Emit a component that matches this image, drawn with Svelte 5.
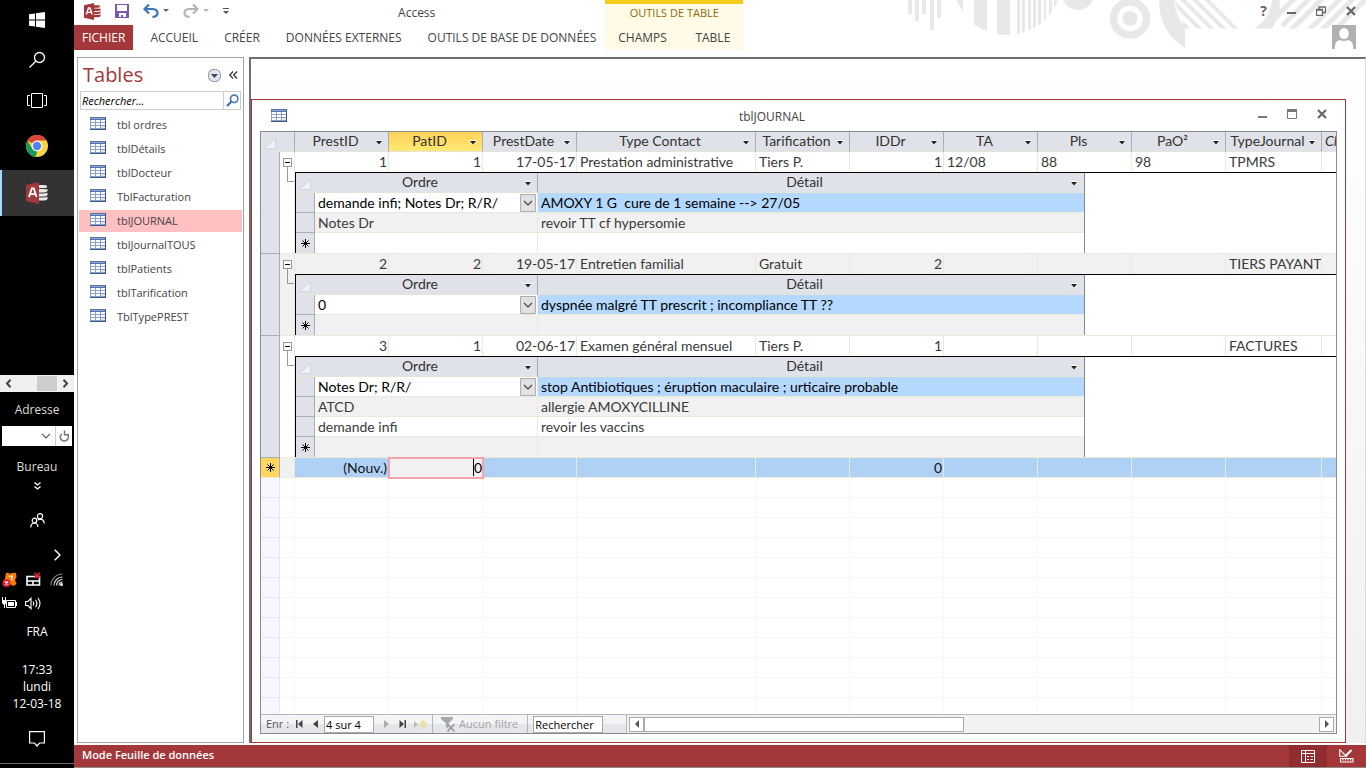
<script>
  const tables = ['tbl ordres', 'tblDétails', 'tblDocteur', 'TblFacturation', 'tblJOURNAL', 'tblJournalTOUS', 'tblPatients', 'tblTarification', 'TblTypePREST'];
  const ribbonTabs = ['ACCUEIL', 'CRÉER', 'DONNÉES EXTERNES', 'OUTILS DE BASE DE DONNÉES'];
  const columns = [
    { name: 'PrestID', num: true },
    { name: 'PatID', num: true },
    { name: 'PrestDate', num: true },
    { name: 'Type Contact', size: 'c-wide' },
    { name: 'Tarification' },
    { name: 'IDDr', num: true },
    { name: 'TA' },
    { name: 'Pls' },
    { name: 'PaO²' },
    { name: 'TypeJournal', size: 'c-type' },
  ];
  const records = [
    {
      cells: ['1', '1', '17-05-17', 'Prestation administrative', 'Tiers P.', '1', '12/08', '88', '98', 'TPMRS'],
      orders: [
        ['demande infi; Notes Dr; R/R/', 'AMOXY 1 G  cure de 1 semaine --> 27/05'],
        ['Notes Dr', 'revoir TT cf hypersomie'],
      ],
    },
    {
      cells: ['2', '2', '19-05-17', 'Entretien familial', 'Gratuit', '2', '', '', '', 'TIERS PAYANT'],
      orders: [['0', 'dyspnée malgré TT prescrit ; incompliance TT ??']],
    },
    {
      cells: ['3', '1', '02-06-17', 'Examen général mensuel', 'Tiers P.', '1', '', '', '', 'FACTURES'],
      orders: [
        ['Notes Dr; R/R/', 'stop Antibiotiques ; éruption maculaire ; urticaire probable'],
        ['ATCD', 'allergie AMOXYCILLINE'],
        ['demande infi', 'revoir les vaccins'],
      ],
    },
  ];
  const emptyRows = Array(40).fill(0);
  const newRow = ['(Nouv.)', '0', '', '', '', '0', '', '', '', ''];
</script>

{#snippet tableIcon()}
  <svg class="ti" width="16" height="13" viewBox="0 0 16 13" shape-rendering="crispEdges">
    <rect width="16" height="13" fill="#8aa0c8" />
    <rect width="16" height="3" fill="#5672a8" />
    <rect x="1" y="1" width="14" height="1" fill="#8fa9d6" />
    <g fill="#fff">
      <rect x="1" y="3" width="4" height="2" /><rect x="6" y="3" width="4" height="2" /><rect x="11" y="3" width="4" height="2" />
      <rect x="1" y="6" width="4" height="2" /><rect x="6" y="6" width="4" height="2" /><rect x="11" y="6" width="4" height="2" />
      <rect x="1" y="9" width="4" height="2" /><rect x="6" y="9" width="4" height="2" />
    </g>
    <rect x="11" y="9" width="4" height="2" fill="#dde6f6" />
    <rect x="15" width="1" height="13" fill="#3c5488" /><rect y="12" width="16" height="1" fill="#3c5488" />
  </svg>
{/snippet}

{#snippet accessIcon(size)}
  <svg width={size} height={size} viewBox="0 0 22 22">
    <g fill="#a4373a" class="disks">
      <path d="M12 3h6q3 0 3 1.500t-3 1.500h-6zM12 7h6q2 .6 3.500 0v2q-1 1.500-4 1.500h-5.500zM12 11.500h6q2 0 3.500-.8v2.300q-1 1.500-4 1.500h-5.500zM12 15.500h6q2 0 3.500-.8v2.300q-1 1.500-4 1.500h-5.500z" />
    </g>
    <path d="M0 3 13 0v22L0 19z" fill="#a4373a" />
    <path d="m3 15 2.800-8.500h2L10.600 15M4.300 12.200h5" fill="none" stroke="#fff" stroke-width="1.800" />
  </svg>
{/snippet}

{#snippet corner()}
  <svg class="corner" width="12" height="11" viewBox="0 0 12 11"><path d="M11.500.5v10H.5z" fill="#edf2f9" stroke="#bccbe0" stroke-width=".6" /></svg>
{/snippet}

{#snippet star()}
  <svg class="star" width="9" height="9" viewBox="0 0 9 9"><path d="M4.500 0v9M0 4.500h9M1.500 1.500l6 6M7.500 1.500l-6 6" stroke="#000" /></svg>
{/snippet}

{#snippet header(name)}
  <div class="head"><span>{name}</span><svg width="8" height="5" viewBox="0 0 8 5"><path d="M0 0h8L4 5z" fill="#fff" /><path d="M1 1h6L4 4.500z" fill="#222" /></svg></div>
{/snippet}

<div class="screen">
  <aside class="taskbar">
    <button class="task" aria-label="Démarrer">
      <svg width="16" height="16" viewBox="0 0 16 16" fill="#fff"><path d="M0 2.300 6 1.500v6H0zM7 1.300 16 0v7.500H7zM0 8.500h6v6l-6-.8zM7 8.500h9V16l-9-1.300z" /></svg>
    </button>
    <button class="task" aria-label="Rechercher">
      <svg width="18" height="18" viewBox="0 0 18 18" fill="none" stroke="#fff" stroke-width="1.300"><circle cx="11.500" cy="6.500" r="5" /><path d="M8 10 1.500 16.500" /></svg>
    </button>
    <button class="task" aria-label="Vue des tâches">
      <svg width="20" height="15" viewBox="0 0 20 15" fill="none" stroke="#fff"><path d="M4.500.5h11v14h-11zM3 2.500H.5v10H3M17 2.500h2.500v10H17" /></svg>
    </button>
    <button class="task tall" aria-label="Chrome">
      <svg width="22" height="22" viewBox="0 0 22 22"><circle cx="11" cy="11" r="11" fill="#fcd23f" /><path d="M11 11 1.500 5.500A11 11 0 0 1 20.500 5.500H11z" fill="#dc4437" /><path d="M1.500 5.500 7 15l4.500 1L9.500 21.900A11 11 0 0 1 1.500 5.500z" fill="#169b5b" /><circle cx="11" cy="11" r="5.400" fill="#fff" /><circle cx="11" cy="11" r="4.200" fill="#4a86ee" /></svg>
    </button>
    <button class="task tall active" aria-label="Access">{@render accessIcon(22)}</button>

    <div class="tray">
      <div class="hscroll">
        <svg width="7" height="9" viewBox="0 0 7 9"><path d="M5.500.8 2 4.500l3.500 3.700" fill="none" stroke="#444" stroke-width="2" /></svg>
        <i></i>
        <svg width="7" height="9" viewBox="0 0 7 9"><path d="M1.500.8 5 4.500 1.500 8.200" fill="none" stroke="#444" stroke-width="2" /></svg>
      </div>
      <label class="t-adr" for="adr">Adresse</label>
      <div class="adr">
        <input id="adr" type="text" />
        <svg width="10" height="6" viewBox="0 0 10 6"><path d="m1 .8 4 4 4-4" fill="none" stroke="#555" stroke-width="1.200" /></svg>
        <button aria-label="Actualiser"><svg width="11" height="12" viewBox="0 0 11 12"><path d="M2.800 3.900A4 4 0 1 0 8.600 4.700" fill="none" stroke="#777" stroke-width="1.600" /><path d="M5.500.5v4.300h4.500" fill="none" stroke="#777" stroke-width="1.500" /></svg></button>
      </div>
      <div class="t-bur">Bureau</div>
      <svg class="c chev2" width="7" height="8" viewBox="0 0 7 8"><path d="m.5.500 3 2.500 3-2.500M.5 4.500l3 2.500 3-2.500" fill="none" stroke="#fff" stroke-width="1.300" /></svg>
      <svg class="c people" width="15" height="15" viewBox="0 0 15 15" fill="none" stroke="#fff" stroke-width="1.200"><circle cx="4.500" cy="7.500" r="2.300" /><circle cx="10" cy="3.300" r="2.600" /><path d="M.7 14.500q.3-4.500 3.800-4.500 3 0 3.500 4M8 7q1-.8 2.300-.8 3.500.2 4 4.300" /></svg>
      <svg class="more" width="7" height="12" viewBox="0 0 7 12"><path d="m.7.700 5.300 5.300-5.300 5.300" fill="none" stroke="#fff" stroke-width="1.400" /></svg>
      <div class="icons">
        <svg width="15" height="15" viewBox="0 0 15 15"><path d="M4 1q2-1 4 1 3-2 6-1l.5 4-1.500 3 1.500 4-3 2-4-2-5-2 .5-4z" fill="#ff7b00" /><path d="m7 4.500 3-.5v4.500" fill="none" stroke="#fff" stroke-width="1.200" /><circle cx="4.500" cy="11" r="4" fill="#e2203c" /><path d="m3 9.500 3 3m0-3-3 3" stroke="#fff" stroke-width="1.200" /></svg>
        <svg width="15" height="14" viewBox="0 0 15 14"><path d="M1 4.500h12.500v8.500H1zM1 9h12.500M7 9v4" fill="none" stroke="#fff" stroke-width="1.600" /><path d="m8.500.8 5.500 5m0-5-5.500 5" stroke="#e02020" stroke-width="1.800" /></svg>
        <svg width="13" height="13" viewBox="0 0 13 13" fill="none" stroke="#ddd" stroke-width="1.100"><path d="M1 12.500A11.500 11.500 0 0 1 12.500 1" stroke="#888" /><path d="M4 12.500a8.500 8.500 0 0 1 8.500-8.500" /><path d="M6.500 12.500a6 6 0 0 1 6-6M9 12.500A3.500 3.500 0 0 1 12.500 9" /><circle cx="11.500" cy="11.500" r="1" fill="#fff" /></svg>
      </div>
      <div class="icons">
        <svg width="16" height="13" viewBox="0 0 16 13"><path d="M5.500 3.500h9v7h-9z" fill="none" stroke="#fff" /><path d="M7 5h6v4H7zM15 5h1v4h-1zM1 3h4v3L4 8v3H3V8L1 6zM1 0h1v3H1zM4 0h1v3H4z" fill="#fff" /></svg>
        <svg width="17" height="13" viewBox="0 0 17 13" fill="none" stroke="#fff" stroke-width="1.100"><path d="M.6 4.500h2.400L6 1.300v10.400L3 8.500H.6zM8 4.500q1.500 2 0 4M10.500 2.800q2.600 3.700 0 7.400M13 1q4 5.500 0 11" /></svg>
        <span></span>
      </div>
      <div class="t-fra">FRA</div>
      <div class="clock"><span>17:33</span><span>lundi</span><span>12-03-18</span></div>
      <svg class="c note" width="16" height="16" viewBox="0 0 16 16"><path d="M.6.600h14.800v11.400H10.500L8 15l-2.500-3H.6z" fill="none" stroke="#fff" stroke-width="1.200" /></svg>
      <hr />
    </div>
  </aside>

  <div class="app">
    <header>
      <svg class="art" width="461" height="50" viewBox="905 0 461 50" fill="#e8e8e8">
        <defs>
          <clipPath id="disk"><circle cx="1007" cy="-20" r="55" /></clipPath>
          <clipPath id="hatchL"><path d="M1174 0h82v28.500h-71z" /></clipPath>
          <clipPath id="hatchR"><path d="M1270 0h96v28.500h-96z" /></clipPath>
        </defs>
        <path d="M908 0h4v14h-4zM915 0h4v21h-4zM922 0h4v14h-4zM930 0h4v30h-4zM937 0h4v18h-4zM956 0h7v12z" />
        <path clip-path="url(#disk)" d="M974 0h13v40h-13zM997 0h13v40h-13zM1017 0h3v40h-3zM1022 0h3v40h-3zM1028 0h3v40h-3zM1033 0h3v40h-3zM1038 0h3v40h-3zM1044 0h2v40h-2zM1049 0h3v40h-3zM1054 0h3v40h-3z" />
        <circle cx="1078" cy="-6" r="16" />
        <circle cx="1130" cy="18.500" r="16.500" fill="none" stroke="#e8e8e8" stroke-width="7.500" />
        <circle cx="1130" cy="18.500" r="7.500" />
        <path d="M1159 0h15q2 16 11 28v20Q1159 32 1159 0zM1272 0h8q0 16-8 28.500h-18q16-10 18-28.500z" />
        <g clip-path="url(#hatchL)" stroke="#e8e8e8" stroke-width="4"><path d="m1155-4 36 36M1167-4l36 36M1179-4l36 36M1191-4l36 36M1203-4l36 36" /></g>
        <g clip-path="url(#hatchR)" stroke="#e8e8e8" stroke-width="5"><path d="m1297-4-24 24M1312-4l-30 30M1325-4l-36 36M1343-4l-36 36M1356-4l-36 36M1369-4l-36 36" /></g>
      </svg>
      <div class="quick">
        {@render accessIcon(17)}
        <svg width="14" height="14" viewBox="0 0 14 14"><path d="M0 0h14v14H0z" fill="#7e57b0" /><path d="M2 1h10v6H2zM4 9h7v4H8v-2H6v2H4z" fill="#fff" /></svg>
        <svg width="26" height="14" viewBox="0 0 26 14"><path d="M2 5h8q4.500.5 4.500 4 0 3.500-5 4" fill="none" stroke="#3b76b9" stroke-width="2.200" /><path d="M6 .5 1.500 5 6 9.500" fill="none" stroke="#3b76b9" stroke-width="2.200" /><path d="M20 5h6l-3 3z" fill="#666" /></svg>
        <svg width="26" height="14" viewBox="0 0 26 14"><path d="M14 5H6q-4.500.5-4.500 4 0 3.500 5 4" fill="none" stroke="#b5b5b5" stroke-width="2.200" /><path d="m10 .5 4.500 4.500L10 9.500" fill="none" stroke="#b5b5b5" stroke-width="2.200" /><path d="M20 5h6l-3 3z" fill="#b5b5b5" /></svg>
        <svg width="6" height="7" viewBox="0 0 6 7"><path d="M0 0h6v1H0zM0 3h6L3 6z" fill="#555" /></svg>
      </div>
      <div class="title">Access</div>
      <nav class="ribbon">
        <button class="file">FICHIER</button>
        {#each ribbonTabs as t}<button>{t}</button>{/each}
      </nav>
      <div class="context">
        <span>OUTILS DE TABLE</span>
        <div><button>CHAMPS</button><button>TABLE</button></div>
      </div>
      <div class="wc">
        <div class="wb">
          <button>?</button>
          <button aria-label="Réduire"><svg width="9" height="10" viewBox="0 0 9 10"><path d="M0 6h9v2H0z" fill="#666" /></svg></button>
          <button aria-label="Restaurer"><svg width="10" height="10" viewBox="0 0 10 10"><path d="M3 3V1h6.500v5.500H7M.5 3.500h6v6h-6zM0 4h7M3 1.200h7" fill="none" stroke="#666" stroke-width="1.300" /></svg></button>
          <button aria-label="Fermer"><svg width="10" height="10" viewBox="0 0 10 10"><path d="m1 1 8 8m0-8-8 8" stroke="#666" stroke-width="2.200" /></svg></button>
        </div>
        <svg class="user" width="24" height="24" viewBox="0 0 24 24"><path d="M0 0h24v24H0z" fill="#b0b0b0" /><ellipse cx="12" cy="8.500" rx="4.800" ry="5.500" fill="#fff" /><path d="M3 24v-3q0-5 5-6 4 2 8 0 5 1 5 6v3z" fill="#fff" /></svg>
      </div>
    </header>

    <div class="body">
      <aside class="nav">
        <div class="nav-title">
          <h1>Tables</h1>
          <button aria-label="Options"><svg width="13" height="13" viewBox="0 0 13 13"><rect x=".5" y=".5" width="12" height="12" rx="5" fill="#e3e5ee" stroke="#8d92a3" /><path d="M3 5h7l-3.500 4z" fill="#445" /></svg></button>
          <button aria-label="Réduire le volet"><svg width="9" height="8" viewBox="0 0 9 8"><path d="M4 .5.8 4 4 7.500M8 .5 4.800 4 8 7.500" fill="none" stroke="#333" stroke-width="1.300" /></svg></button>
        </div>
        <div class="find">
          <input type="text" placeholder="Rechercher..." aria-label="Rechercher une table" />
          <button aria-label="Lancer la recherche"><svg width="13" height="13" viewBox="0 0 13 13"><circle cx="8.200" cy="4.800" r="3.700" fill="none" stroke="#4779b5" stroke-width="1.600" /><path d="m5.500 7.500-4.500 4.500" stroke="#4779b5" stroke-width="2.400" /></svg></button>
        </div>
        <ul>
          {#each tables as t}
            <li class:sel={t === 'tblJOURNAL'}>{@render tableIcon()}<span>{t}</span></li>
          {/each}
        </ul>
      </aside>

      <main>
        <section class="win">
          <div class="win-title">
            {@render tableIcon()}
            <h2>tblJOURNAL</h2>
            <div class="win-btns">
              <button aria-label="Réduire"><svg width="10" height="10" viewBox="0 0 10 10"><path d="M1 7h9v2H1z" fill="#777" /></svg></button>
              <button aria-label="Agrandir"><svg width="10" height="10" viewBox="0 0 10 10"><path d="M.5.500h9v9h-9z" fill="none" stroke="#777" /><path d="M0 0h10v3H0z" fill="#777" /></svg></button>
              <button aria-label="Fermer"><svg width="10" height="10" viewBox="0 0 10 10"><path d="m1 1 8 8m0-8-8 8" stroke="#666" stroke-width="2.200" /></svg></button>
            </div>
          </div>

          <div class="sheet">
            <div class="grid">
              <table class="main">
                <colgroup>
                  <col class="c-sel" /><col class="c-exp" />
                  {#each columns as c}<col class={c.size ?? 'c-col'} />{/each}
                  <col />
                </colgroup>
                <thead>
                  <tr>
                    <th class="sel" colspan="2">{@render corner()}</th>
                    {#each columns as c}<th class:cur={c.name === 'PatID'}>{@render header(c.name)}</th>{/each}
                    <th class="last"><em>Cliquer pour ajouter</em></th>
                  </tr>
                </thead>
                {#each records as r, i}
                  <tbody class="rec-body" class:alt={i % 2 === 1}>
                    <tr>
                      <td class="sel" rowspan="2"></td>
                      <td class="exp" rowspan="2"><button aria-label="Réduire le détail"></button><i></i></td>
                      {#each r.cells as v, j}<td class:num={columns[j].num}>{v}</td>{/each}
                      <td></td>
                    </tr>
                    <tr>
                      <td class="detail" colspan="11">
                        <table class="sub">
                          <colgroup><col class="s-sel" /><col class="s-ord" /><col class="s-det" /></colgroup>
                          <thead>
                            <tr><th class="sel">{@render corner()}</th><th>{@render header('Ordre')}</th><th>{@render header('Détail')}</th></tr>
                          </thead>
                          <tbody>
                            {#each r.orders as o, k}
                              <tr class:odd={k % 2 === 1} class:first={k === 0}>
                                <td class="sel"></td>
                                {#if k === 0}
                                  <td class="combo">
                                    <div>
                                      <select aria-label="Ordre"><option>{o[0]}</option></select>
                                      <svg width="16" height="18" viewBox="0 0 16 18"><path d="M.5.500h15v17H.5z" fill="#e1e1e1" stroke="#adadad" /><path d="m4 7 4 4 4-4" fill="none" stroke="#444" stroke-width="1.200" /></svg>
                                    </div>
                                  </td>
                                {:else}
                                  <td>{o[0]}</td>
                                {/if}
                                <td>{o[1]}</td>
                              </tr>
                            {/each}
                            <tr class:odd={r.orders.length % 2 === 1}><td class="sel">{@render star()}</td><td></td><td></td></tr>
                          </tbody>
                        </table>
                      </td>
                    </tr>
                  </tbody>
                {/each}
                <tbody class="new">
                  <tr>
                    <td class="sel">{@render star()}</td>
                    <td class="exp"></td>
                    {#each newRow as v, j}
                      {#if j === 1}
                        <td class="edit"><div><i></i><input value={v} size="1" aria-label="PatID" /></div></td>
                      {:else}
                        <td class:num={columns[j].num}>{v}</td>
                      {/if}
                    {/each}
                    <td></td>
                  </tr>
                </tbody>
                <tbody class="empty">
                  {#each emptyRows as _}
                    <tr><td class="sel"></td><td></td>{#each columns as _c}<td></td>{/each}<td></td></tr>
                  {/each}
                </tbody>
              </table>
            </div>

            <div class="recnav">
              <label for="rec">Enr :</label>
              <button aria-label="Premier"><svg width="7" height="8" viewBox="0 0 7 8" fill="#444"><path d="M0 0h1.500v8H0zM6.500 0v8L2 4z" /></svg></button>
              <button aria-label="Précédent"><svg width="5" height="8" viewBox="0 0 5 8" fill="#444"><path d="M5 0v8L0 4z" /></svg></button>
              <input id="rec" class="rec" value="4 sur 4" />
              <button aria-label="Suivant"><svg width="5" height="8" viewBox="0 0 5 8" fill="#aaa"><path d="M0 0v8l5-4z" /></svg></button>
              <button aria-label="Dernier"><svg width="7" height="8" viewBox="0 0 7 8" fill="#444"><path d="M5.500 0H7v8H5.500zM.5 0v8L5 4z" /></svg></button>
              <button class="add" aria-label="Nouveau"><svg width="13" height="9" viewBox="0 0 13 9"><path d="M0 1v7l4-3.500z" fill="#bbb" /><path d="M9 0v9M5 4.500h8M6 1.500l6 6M12 1.500l-6 6" stroke="#ecdfa6" stroke-width="1.500" /></svg></button>
              <button class="filter" disabled><svg width="15" height="15" viewBox="0 0 15 15"><path d="M0 0h12v2L7.500 6.500V12L5 10V6.500L0 2z" fill="#a9a9a9" /><path d="m6.500 7 7 7.500m0-7.500-7 7.500" stroke="#999" stroke-width="1.600" /></svg>Aucun filtre</button>
              <input class="seek" value="Rechercher" aria-label="Rechercher un enregistrement" />
              <div class="sb">
                <button aria-label="Défiler à gauche"><svg width="4" height="8" viewBox="0 0 4 8"><path d="M4 0v8L0 4z" fill="#555" /></svg></button>
                <i></i><b></b>
                <button aria-label="Défiler à droite"><svg width="4" height="8" viewBox="0 0 4 8"><path d="M0 0v8l4-4z" fill="#555" /></svg></button>
              </div>
            </div>
          </div>
        </section>
      </main>
    </div>

    <footer>
      <span>Mode Feuille de données</span>
      <button class="on" aria-label="Mode Feuille de données"><svg width="14" height="13" viewBox="0 0 14 13"><path d="M.5.500h13v12H.5zM.5 3.500h13M4.500.5v12M6 6.500h2M9.500 6.500h2.500M6 9.500h2M9.500 9.500h2.500" fill="none" stroke="#fff" /></svg></button>
      <button aria-label="Mode Création"><svg width="15" height="14" viewBox="0 0 15 14"><path d="M.7.700v6.600h6.600zM1.500 9.500h12.500v3.500H1.500zM4 10v1.500M6.500 10v1.500M9 10v1.500M11.500 10v1.500" fill="none" stroke="#fff" stroke-width="1.100" /><path d="m6.500 7 6-6" stroke="#fff" stroke-width="2.200" /></svg></button>
    </footer>
  </div>
</div>

<style>
  :global(body) { background: #fff; }
  * { box-sizing: border-box; }
  .screen { display: grid; grid-template-columns: 74px minmax(0, 1fr); height: 100vh; overflow: hidden; font: 12px/16px 'Open Sans', sans-serif; color: #444; }
  button { border: 0; background: none; padding: 0; font: inherit; color: inherit; }
  input, select { font: inherit; color: #000; border: 0; padding: 0; min-width: 0; border-radius: 0; }
  svg { display: block; flex: none; }
  h1, h2, ul { margin: 0; padding: 0; font-weight: 400; }

  /* Windows task bar */
  .taskbar { background: #000; color: #ddd; display: flex; flex-direction: column; overflow: hidden; }
  .task { height: 40px; display: grid; place-items: center; flex: none; }
  .task.tall { height: 48px; padding-top: 4px; }
  .task.active { background: #333; border-left: 2px solid #a6d8ff; margin-top: 2px; height: 46px; padding: 0 2px 0 0; }
  .task.active .disks { fill: #e8e8e8; }
  .tray { margin-top: auto; display: flex; flex-direction: column; text-align: center; flex: none; }
  .c { align-self: center; }
  .hscroll { background: #f0f0f0; height: 17px; display: flex; align-items: center; padding: 0 5px; }
  .hscroll i { background: #cdcdcd; width: 20px; height: 15px; margin: 0 5px 0 25px; }
  .t-adr { margin-top: 10px; }
  .adr { margin: 8px 2px 0; height: 20px; background: #fff; display: flex; align-items: center; }
  .adr input { flex: 1; background: none; }
  .adr button { width: 17px; height: 20px; margin-left: 4px; border-left: 1px solid #ccc; display: grid; place-items: center; }
  .t-bur { margin-top: 13px; }
  .chev2 { margin-top: 7px; }
  .people { margin-top: 23px; }
  .more { margin: 21px 13px 0 auto; }
  .icons { display: grid; grid-template-columns: 16px 17px 13px; gap: 8px; justify-items: center; align-items: center; height: 16px; margin: 10px 0 0 1px; }
  .icons + .icons { margin-top: 8px; }
  .t-fra { margin-top: 13px; color: #fff; }
  .clock { margin-top: 21px; display: flex; flex-direction: column; line-height: 17px; color: #fff; }
  .note { margin-top: 19px; }
  hr { width: 100%; border: 0; border-top: 1px solid #666; margin: 16px 0 4px; }

  /* Ribbon */
  .app { display: flex; flex-direction: column; min-width: 0; min-height: 0; height: 100vh; }
  header { height: 57px; flex: none; display: grid; grid-template: 25px 25px / auto 138px minmax(0, 1fr); position: relative; }
  .art { position: absolute; right: 0; top: 0; }
  .quick { grid-area: 1 / 1; display: flex; align-items: center; padding: 0 0 3px 10px; gap: 14px; }
  .title { grid-area: 1 / 1; justify-self: end; padding: 5px 170px 0 0; }
  .ribbon { grid-area: 2 / 1; display: flex; margin-right: -4px; white-space: nowrap; }
  .ribbon button { padding: 0 13px; }
  .ribbon .file { background: #a4373a; color: #fff; padding: 0 8px; margin-right: 4px; }
  .context { grid-area: 1 / 2 / 3 / 3; background: #fffbe6; border-top: 4px solid #f5cb1d; display: flex; flex-direction: column; text-align: center; }
  .context span { color: #8f6a0a; font-size: 11px; line-height: 18px; }
  .context div { display: flex; justify-content: space-between; padding: 6px 13px 0; line-height: 20px; }
  .wc { grid-area: 1 / 3 / 3 / 4; display: flex; flex-direction: column; align-items: flex-end; position: relative; padding-right: 10px; }
  .wb { display: flex; gap: 20px; align-items: center; height: 22px; font-size: 14px; font-weight: 700; color: #666; }
  .user { margin-top: 3px; }

  /* Body */
  .body { flex: 1; min-height: 0; display: flex; border-bottom: 2px solid #fff; }
  .nav { width: 167px; flex: none; margin-left: 3px; border: 1px solid #9ea3ad; padding: 6px 1px 0; }
  .nav-title { display: flex; align-items: center; padding: 0 4px; height: 22px; gap: 8px; }
  h1 { color: #a4373a; font-size: 20px; line-height: 24px; flex: 1; }
  .find { margin: 5px 1px 4px; height: 19px; display: flex; border: 1px solid #ccc; }
  .find input { flex: 1; padding-left: 1px; font-size: 11px; font-style: italic; }
  .find input::placeholder { color: #000; opacity: 1; }
  .find button { width: 17px; border-left: 1px solid #ccc; display: grid; place-items: center; }
  ul { list-style: none; font-size: 11px; }
  li { height: 22px; margin-bottom: 2px; display: flex; align-items: center; gap: 11px; padding-left: 11px; }
  li .ti { margin-bottom: 3px; }
  li.sel { background: #ffc0c2; }
  main { flex: 1; min-width: 0; margin-left: 5px; border: 2px solid #6f6f6f; border-width: 2px 1px 0 2px; border-right-color: #ddd; background: linear-gradient(#fff, #f0f0f0); padding: 40px 19px 0 0; display: flex; }
  .win { flex: 1; min-width: 0; background: #fff; border: 1px solid #a4373a; display: flex; flex-direction: column; padding: 0 8px 8px; }
  .win-title { height: 31px; flex: none; display: grid; grid-template-columns: 28px 1fr 80px; align-items: center; padding-left: 11px; }
  h2 { font-size: 12px; line-height: 16px; text-align: center; padding: 3px 12px 0 0; }
  .win-btns { display: flex; gap: 20px; justify-content: flex-end; padding-right: 10px; margin-bottom: 3px; }
  .sheet { flex: 1; min-height: 0; display: flex; flex-direction: column; border: 1px solid #868b95; }
  .grid { flex: 1 1 0; min-height: 0; overflow: hidden; }

  /* Datasheet */
  table { border-collapse: separate; border-spacing: 0; table-layout: fixed; font: 14px/19px Lato, sans-serif; }
  .main { width: 100%; min-width: 1059px; }
  .c-sel { width: 19px; } .c-exp { width: 15px; } .c-col { width: 94px; } .c-wide { width: 179px; } .c-type { width: 96px; }
  th { height: 20px; padding: 0 5px 2px 3px; line-height: 17px; background: #dfe2e8; border-right: 1px solid #a9adb5; border-bottom: 1px solid #e6e4d8; font-weight: 400; color: #333; overflow: hidden; white-space: nowrap; }
  th.cur { background: linear-gradient(#ffd25a, #ffe873); }
  th.last, .main > tbody td:last-child { border-right: 0; }
  th.last { text-align: left; }
  th.sel { padding: 0; }
  .corner { margin: 4px 0 0 3px; }
  .head { display: grid; grid-template-columns: 1fr 8px; gap: 2px; align-items: center; }
  .head svg { margin-top: 3px; }
  td { height: 20px; padding: 0 0 0 3px; border-right: 1px solid #ebe9dd; border-bottom: 1px solid #ebe9dd; white-space: pre; overflow: hidden; color: #3a3a3a; }
  td.num { text-align: right; padding-right: 1px; }
  .alt > tr > td { background: #f1f1f1; }
  .alt > tr > td.detail { background: #fff; }
  .main td.sel { background: #dfe2e8; border-right: 1px solid #a9adb5; border-bottom: 1px solid #a9adb5; padding: 0; }
  .rec-body > tr:first-child > td:not([rowspan]) { border-bottom: 0; padding-bottom: 1px; }
  td.exp { padding: 6px 0 0 3px; vertical-align: top; }
  .exp button { display: block; width: 9px; height: 9px; border: 1px solid #999; background: linear-gradient(#000, #000) center / 5px 1px no-repeat #fff; }
  .exp i { display: block; width: 7px; height: 15px; margin-left: 4px; border: 1px solid #999; border-width: 0 0 1px 1px; }
  td.detail { padding: 0; border-top: 1px solid #000; height: 22px; }
  .sub { width: 790px; border-left: 1px solid #000; border-right: 1px solid #888; }
  .s-sel { width: 19px; } .s-ord { width: 223px; }
  .sub th:last-child, .sub td:last-child { border-right: 0; }
  .sub th:last-child { padding-right: 6px; }
  .sub th.sel { border-right: 0; }
  .odd td { background: #f1f1f1; }
  .sub tr:last-child td { border-bottom: 0; }
  .first td { color: #000; }
  .first td:last-child { background: #b4d8fe; }
  .combo { padding: 0 0 0 3px; }
  .combo div { display: grid; grid-template-columns: 1fr 17px; height: 19px; align-items: end; }
  .combo select { appearance: none; background: none; line-height: 19px; outline: 0; grid-area: 1 / 1 / 2 / 3; }
  .combo svg { grid-area: 1 / 2; pointer-events: none; }
  .star { margin: 0 auto; }
  .new td { background: #afd1f5; color: #111; }
  .main .new td.sel { background: #ffd75e; border-bottom-color: #ebe9dd; }
  .new td.exp { background: #f1f1f1; }
  .new td.edit { background: #f1f1f1; padding: 0; outline: 2px solid #f5a3a8; outline-offset: -1px; }
  .edit div { display: flex; justify-content: flex-end; align-items: center; }
  .edit i { width: 1px; height: 17px; background: #000; }
  .edit input { width: 8px; background: none; line-height: 19px; text-align: right; }
  .empty td { border-color: #f7f7f5; }
  .main .empty td.sel { background: #f5f6fe; border-color: #e4e6f0; }

  /* Record navigation */
  .recnav { height: 19px; flex: none; display: flex; align-items: center; border-top: 1px solid #b5b8bf; background: linear-gradient(#f3f4f6 50%, #e4e6ea 50%); font-size: 11px; padding-left: 5px; }
  .recnav > button { margin-left: 10px; }
  .recnav > label { color: #555; margin-right: -3px; }
  .recnav input { height: 17px; border: 1px solid #aaa; background: #fff; padding-left: 1px; }
  .rec { width: 50px; margin-left: 6px; }
  .recnav > .add { margin-left: 8px; }
  .recnav > .filter { display: flex; align-items: center; gap: 3px; height: 18px; padding: 0 9px 0 8px; margin-left: 5px; border: 1px solid #b5b8bf; border-width: 0 1px; color: #a5a5a5; }
  .seek { width: 70px; margin-left: 5px; }
  .sb { flex: 1; margin-left: 23px; height: 18px; border-left: 1px solid #b5b8bf; background: #f2f2f2; display: flex; align-items: center; padding: 0 2px; }
  .sb button { width: 15px; height: 15px; border: 1px solid #aaa; background: #fff; display: grid; place-items: center; }
  .sb i { flex: 319 1 0; height: 15px; border: 1px solid #aaa; background: #fff; }
  .sb b { flex: 356 1 0; }

  footer { height: 23px; flex: none; background: #a4373a; border-bottom: 1px solid #8a8a8a; color: #fff; display: flex; align-items: stretch; font-size: 11px; font-weight: 600; line-height: 20px; padding-right: 1px; }
  footer span { flex: 1; padding-left: 8px; }
  footer button { width: 38px; display: grid; place-items: center; }
  footer .on { background: #912d30; }
</style>
